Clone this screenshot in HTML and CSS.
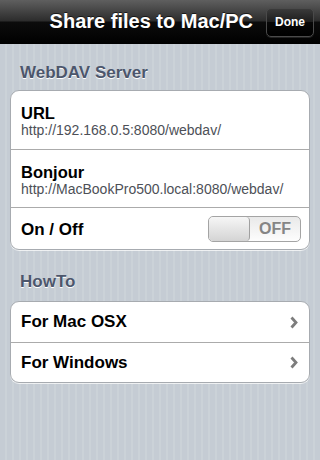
FILE: index.html
```html
<!DOCTYPE html>
<html>
<head>
<meta charset="utf-8">
<link rel="stylesheet" href="styles.css">
</head>
<body>
<div class="screen">
  <header class="nav">
    <h1 class="nav-title">Share files to Mac/PC</h1>
    <button class="nav-btn">Done</button>
  </header>
  <main class="content">
    <h2 class="section-title first">WebDAV Server</h2>
    <section class="card">
      <div class="row row-sub">
        <div class="row-title">URL</div>
        <div class="row-detail">http://192.168.0.5:8080/webdav/</div>
      </div>
      <div class="row row-sub">
        <div class="row-title">Bonjour</div>
        <div class="row-detail">http://MacBookPro500.local:8080/webdav/</div>
      </div>
      <div class="row row-switch">
        <div class="row-label">On / Off</div>
        <div class="switch">
          <div class="switch-knob"></div>
          <div class="switch-text">OFF</div>
        </div>
      </div>
    </section>
    <h2 class="section-title">HowTo</h2>
    <section class="card">
      <div class="row row-link">
        <div class="row-label">For Mac OSX</div>
        <svg class="chevron" width="8" height="13" viewBox="0 0 8 13"><path d="M1.5 1.5 L6 6.5 L1.5 11.5" fill="none" stroke="#7d7d7d" stroke-width="2.8" stroke-linejoin="miter"/></svg>
      </div>
      <div class="row row-link">
        <div class="row-label">For Windows</div>
        <svg class="chevron" width="8" height="13" viewBox="0 0 8 13"><path d="M1.5 1.5 L6 6.5 L1.5 11.5" fill="none" stroke="#7d7d7d" stroke-width="2.8" stroke-linejoin="miter"/></svg>
      </div>
    </section>
  </main>
</div>
</body>
</html>
```

FILE: styles.css
```css
* { box-sizing: border-box; }
html, body {
  margin: 0;
  padding: 0;
}
body {
  width: 320px;
  height: 460px;
  overflow: hidden;
  font-family: "Liberation Sans", Arial, sans-serif;
  background: repeating-linear-gradient(90deg, #c5ccd4 0 5px, #cbd2d8 5px 7px);
}
.screen {
  width: 320px;
  height: 460px;
  display: flex;
  flex-direction: column;
}
.nav {
  height: 44px;
  flex: none;
  display: flex;
  align-items: center;
  justify-content: flex-end;
  padding: 0 6px 3px 0;
  background: linear-gradient(#5f5f5f 0, #2c2c2c 21px, #0c0c0c 22px, #000 44px);
}
.nav-title {
  margin: 0 13px 0 0;
  font-size: 20px;
  line-height: 20px;
  font-weight: bold;
  color: #fff;
  text-shadow: 0 -1px 0 rgba(0,0,0,0.6);
}
.nav-btn {
  width: 48px;
  height: 29px;
  margin-top: 3px;
  padding: 0;
  font-family: "Liberation Sans", Arial, sans-serif;
  font-size: 12px;
  font-weight: bold;
  color: #fff;
  border: 1px solid #4a4a4a;
  border-radius: 5px;
  background: linear-gradient(#3a3a3a 0, #1c1c1c 50%, #070707 50%, #000 100%);
  box-shadow: 0 1px 0 rgba(255,255,255,0.12);
}
.content {
  padding: 0 10px;
}
.section-title {
  margin: 22px 0 9px 10px;
  font-size: 17px;
  line-height: 20px;
  font-weight: bold;
  color: #4c566c;
  text-shadow: 0 1px 0 #fff;
}
.section-title.first {
  margin-top: 19px;
  margin-bottom: 7px;
}
.card {
  background: #fff;
  border: 1px solid #a7abb0;
  border-radius: 9px;
  box-shadow: 0 1px 0 rgba(255,255,255,0.7);
  overflow: hidden;
}
.row + .row {
  border-top: 1px solid #ababab;
}
.row {
  padding: 0 0 0 10px;
}
.row-sub {
  height: 58px;
  padding-top: 12px;
}
.row-title {
  font-size: 16.5px;
  line-height: 20px;
  font-weight: bold;
  color: #000;
}
.row-detail {
  font-size: 14px;
  line-height: 15px;
  color: #4d5057;
}
.row-label {
  font-size: 17px;
  line-height: 20px;
  font-weight: bold;
  color: #000;
}
.row-switch {
  height: 42px;
  display: flex;
  align-items: center;
  justify-content: space-between;
  padding-right: 8px;
}
.row-switch .row-label {
  margin-top: 2px;
}
.row-link {
  height: 40px;
  display: flex;
  align-items: center;
  justify-content: space-between;
  padding-right: 11px;
}
.chevron {
  display: block;
}
.switch {
  width: 93px;
  height: 26px;
  margin-top: 1px;
  display: flex;
  border: 1px solid #a4a4a4;
  border-radius: 5px;
  overflow: hidden;
  background: linear-gradient(#e9e9e9, #fdfdfd);
}
.switch-knob {
  width: 41px;
  flex: none;
  border-right: 1px solid #a0a0a0;
  border-radius: 4px;
  background: linear-gradient(#f6f6f6, #d4d4d4);
}
.switch-text {
  flex: 1;
  text-align: center;
  font-size: 16px;
  line-height: 24px;
  font-weight: bold;
  color: #858585;
}
```
